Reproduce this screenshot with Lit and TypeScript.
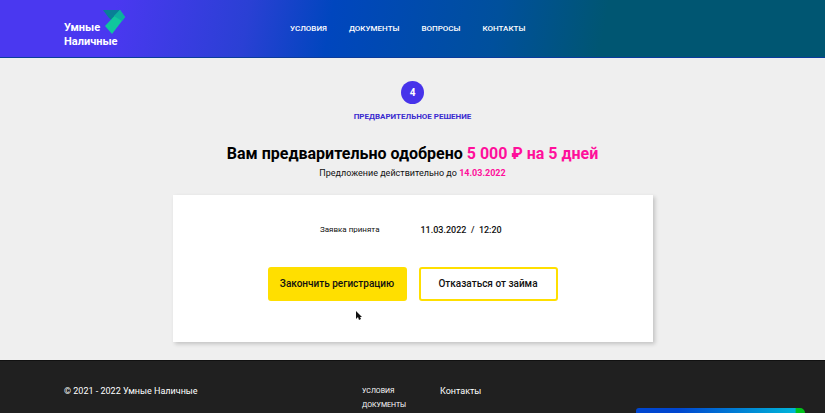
import { LitElement, html, css } from "lit";
import { customElement } from "lit/decorators.js";

@customElement("app-root")
export class AppRoot extends LitElement {
  static styles = css`
    :host {
      display: flex;
      flex-direction: column;
      min-height: 100vh;
      background: #efefef;
      color: #111;
      font-family: Roboto, "Liberation Sans", sans-serif;
      font-size: 9px;
      line-height: 14px;
    }
    * {
      box-sizing: border-box;
    }
    a {
      color: inherit;
      text-decoration: none;
    }
    .header {
      background: linear-gradient(100deg, #4a38f0 14%, #2a40d4 30%, #0046be 40%, #00509c 60%, #005672 73%);
      border-bottom: 1px solid #0a3c9c;
      color: #fff;
    }
    .inner {
      padding: 0 64px;
      display: grid;
      grid-template-columns: 226px 1fr;
      align-items: center;
    }
    .header .inner {
      min-height: 57px;
    }
    .logo {
      position: relative;
      align-self: start;
      width: 64px;
      padding-top: 21px;
      font-size: 11px;
      line-height: 14px;
      font-weight: 700;
    }
    .logo span {
      display: block;
    }
    .mark {
      position: absolute;
      left: 39px;
      top: 9px;
    }
    .nav {
      display: flex;
      gap: 22px;
      font-size: 8px;
      font-weight: 500;
      text-transform: uppercase;
    }
    .main {
      display: flex;
      flex-direction: column;
      align-items: center;
      padding: 23px 16px 18px;
    }
    .step {
      width: 23px;
      height: 23px;
      border-radius: 50%;
      background: #4733ea;
      color: #fff;
      font-size: 10px;
      font-weight: 700;
      line-height: 23px;
      text-align: center;
    }
    .caption {
      margin-top: 6px;
      color: #3a2bcf;
      font-size: 8px;
      font-weight: 700;
      text-transform: uppercase;
    }
    h1 {
      margin: 18px 0 0;
      font-size: 16px;
      line-height: 24px;
      font-weight: 700;
      color: #000;
    }
    .accent {
      color: #ff0f9b;
      font-weight: 700;
    }
    .terms {
      margin: 0;
    }
    .card {
      width: 480px;
      max-width: 100%;
      margin-top: 15px;
      padding: 28px 20px 41px;
      background: #fff;
      box-shadow: 2px 2px 4px #00000030;
    }
    .status {
      display: grid;
      grid-template-columns: 187px 1fr;
      column-gap: 41px;
      margin: 0;
    }
    .status dt {
      text-align: right;
      font-size: 8px;
    }
    .status dd {
      margin: 0;
      font-weight: 500;
      white-space: pre;
    }
    .actions {
      display: flex;
      justify-content: center;
      gap: 12px;
      margin-top: 30px;
    }
    button {
      width: 139px;
      height: 34px;
      padding: 0;
      border: 2px solid #ffdf00;
      border-radius: 3px;
      background: #fff;
      color: #111;
      font: 500 10px/14px Roboto, "Liberation Sans", sans-serif;
    }
    button.primary {
      background: #ffdf00;
    }
    .footer {
      flex: 1;
      background: #202020;
      border-top: 1px solid #111;
      color: #fff;
    }
    .footer .inner {
      grid-template-columns: 298px 78px 1fr;
      align-items: start;
      padding-top: 23px;
    }
    .links {
      display: flex;
      flex-direction: column;
      font-size: 7px;
      text-transform: uppercase;
    }
    .chat {
      position: fixed;
      right: 20px;
      bottom: 0;
      width: 169px;
      height: 5px;
      padding: 0;
      border: 0;
      border-radius: 6px 10px 0 0;
      background: linear-gradient(90deg, #0046d0 25%, #00b4d8 94%, #00c21c 95%);
    }
    .cursor {
      position: absolute;
      left: 355px;
      top: 310px;
    }
  `;

  render() {
    return html`
      <header class="header">
        <div class="inner">
          <a class="logo" href="#">
            <span>Умные</span><span>Наличные</span>
            <svg class="mark" width="24" height="26" viewBox="0 0 24 26" aria-hidden="true">
              <path d="M0 1H17L9 11L6 9Z" fill="#087f96" />
              <path d="M17 1L22 8L9 25L2 17Z" fill="#10c79d" />
              <path d="M17 1L22 8L19 12L11 7Z" fill="#0cb09e" />
            </svg>
          </a>
          <nav class="nav">
            <a href="#">Условия</a><a href="#">Документы</a><a href="#">Вопросы</a><a href="#">Контакты</a>
          </nav>
        </div>
      </header>
      <main class="main">
        <div class="step">4</div>
        <div class="caption">Предварительное решение</div>
        <h1>Вам предварительно одобрено <span class="accent">5 000 ₽ на 5 дней</span></h1>
        <p class="terms">Предложение действительно до <span class="accent">14.03.2022</span></p>
        <section class="card">
          <dl class="status">
            <dt>Заявка принята</dt>
            <dd>11.03.2022  /  12:20</dd>
          </dl>
          <div class="actions">
            <button class="primary" type="button">Закончить регистрацию</button>
            <button type="button">Отказаться от займа</button>
          </div>
        </section>
      </main>
      <footer class="footer">
        <div class="inner">
          <span>© 2021 - 2022 Умные Наличные</span>
          <nav class="links"><a href="#">Условия</a><a href="#">Документы</a></nav>
          <a href="#">Контакты</a>
        </div>
      </footer>
      <button class="chat" type="button" aria-label="Чат"></button>
      <svg class="cursor" width="8" height="12" viewBox="0 0 8 12" aria-hidden="true">
        <path d="M1 1V9L3 7L4 10L6 9L5 7H7Z" fill="#111" />
      </svg>
    `;
  }
}
